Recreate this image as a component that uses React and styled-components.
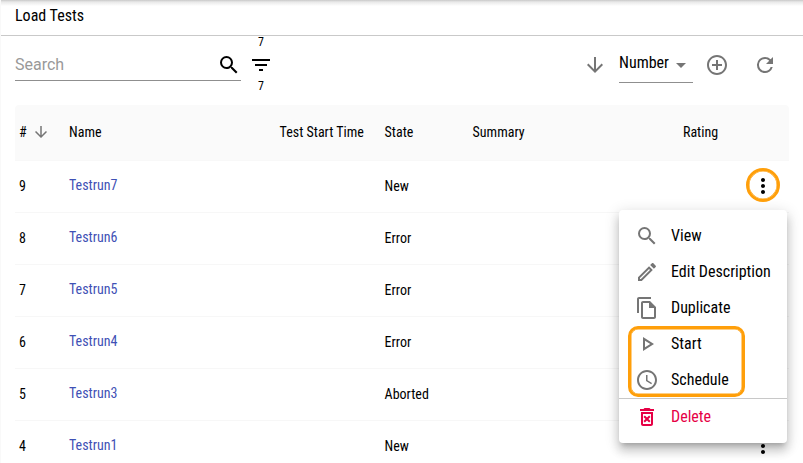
import React from "react";
import styled, { createGlobalStyle, css } from "styled-components";

const GlobalStyle = createGlobalStyle`
  * { box-sizing: border-box; }
  html, body { margin: 0; background: #fff; overflow: hidden; }
  body { font-family: "Roboto Condensed", Roboto, sans-serif; font-stretch: 75%; font-size: 14px; color: #000; }
`;

const PATHS = {
  search:
    "M15.5 14h-.79l-.28-.27A6.471 6.471 0 0 0 16 9.5 6.5 6.5 0 1 0 9.5 16c1.61 0 3.09-.59 4.23-1.57l.27.28v.79l5 4.99L20.49 19l-4.99-5zm-6 0C7.01 14 5 11.99 5 9.5S7.01 5 9.5 5 14 7.01 14 9.5 11.99 14 9.5 14z",
  filter: "M10 18h4v-2h-4v2zM3 6v2h18V6H3zm3 7h12v-2H6v2z",
  down: "M20 12l-1.41-1.41L13 16.17V4h-2v12.17l-5.58-5.59L4 12l8 8 8-8z",
  add: "M13 7h-2v4H7v2h4v4h2v-4h4v-2h-4V7zm-1-5C6.48 2 2 6.48 2 12s4.48 10 10 10 10-4.48 10-10S17.52 2 12 2zm0 18c-4.41 0-8-3.59-8-8s3.59-8 8-8 8 3.59 8 8-3.59 8-8 8z",
  refresh:
    "M17.65 6.35A7.958 7.958 0 0 0 12 4a8 8 0 1 0 7.73 10h-2.08A5.99 5.99 0 0 1 12 18c-3.31 0-6-2.69-6-6s2.69-6 6-6c1.66 0 3.14.69 4.22 1.78L13 11h7V4l-2.35 2.35z",
  more: "M12 8c1.1 0 2-.9 2-2s-.9-2-2-2-2 .9-2 2 .9 2 2 2zm0 2c-1.1 0-2 .9-2 2s.9 2 2 2 2-.9 2-2-.9-2-2-2zm0 6c-1.1 0-2 .9-2 2s.9 2 2 2 2-.9 2-2-.9-2-2-2z",
  edit: "M14.06 9.02l.92.92L5.92 19H5v-.92l9.06-9.06M17.66 3c-.25 0-.51.1-.7.29l-1.83 1.83 3.75 3.75 1.83-1.83c.39-.39.39-1.02 0-1.41l-2.34-2.34c-.2-.2-.45-.29-.71-.29zm-3.6 3.19L3 17.25V21h3.75L17.81 9.94l-3.75-3.75z",
  copy: "M16 1H4c-1.1 0-2 .9-2 2v14h2V3h12V1zm-1 4H8c-1.1 0-1.99.9-1.99 2L6 21c0 1.1.89 2 1.99 2H19c1.1 0 2-.9 2-2V11l-6-6zM8 21V7h6v5h5v9H8z",
  play: "M10 8.64L15.27 12 10 15.36V8.64M8 5v14l11-7L8 5z",
  clock:
    "M11.99 2C6.47 2 2 6.48 2 12s4.47 10 9.99 10C17.52 22 22 17.52 22 12S17.52 2 11.99 2zM12 20c-4.42 0-8-3.58-8-8s3.58-8 8-8 8 3.58 8 8-3.58 8-8 8zm.5-13H11v6l5.25 3.15.75-1.23-4.5-2.67z",
  trash:
    "M14.12 10.47L12 12.59l-2.13-2.12-1.41 1.41L10.59 14l-2.12 2.12 1.41 1.41L12 15.41l2.12 2.12 1.41-1.41L13.41 14l2.12-2.12-1.41-1.41zM15.5 4l-1-1h-5l-1 1H5v2h14V4h-3.5zM6 19c0 1.1.9 2 2 2h8c1.1 0 2-.9 2-2V7H6v12zM8 9h8v10H8V9z",
};

const Svg = styled.svg`
  display: block;
  flex: none;
  width: ${(p) => p.$size}px;
  height: ${(p) => p.$size}px;
  fill: ${(p) => p.$color};
`;

const Icon = ({ name, size = 24, color = "#757575" }) => (
  <Svg viewBox="0 0 24 24" $size={size} $color={color}>
    <path d={PATHS[name]} />
  </Svg>
);

const Page = styled.main`
  position: relative;
  width: 803px;
  height: 463px;
  overflow: hidden;
  border-left: 1px solid #f9f9f9;
  background: #fff;
`;

const TitleBar = styled.header`
  height: 36px;
  padding: 6px 14px 0;
  border-bottom: 1px solid #c9c9c9;
  background: linear-gradient(#c8c8c8, #e9e9e9 2px, #fff 6px);
  font-size: 16px;
  line-height: 20px;
`;

const Toolbar = styled.div`
  display: flex;
  height: 69px;
  padding: 0 14px;
`;

const SearchField = styled.label`
  display: flex;
  align-items: center;
  justify-content: space-between;
  width: 226px;
  height: 45px;
  padding: 13px 0 0;
  border-bottom: 1px solid #8f8f8f;
`;

const Placeholder = styled.span`
  font-family: Roboto, sans-serif;
  font-stretch: 100%;
  font-size: 16px;
  color: #999;
`;

const Filter = styled.div`
  display: flex;
  flex-direction: column;
  align-items: center;
  width: 24px;
  margin-left: 8px;
  font-size: 12px;
  line-height: 12px;
`;

const FilterCount = styled.span`
  height: ${(p) => (p.$above ? 17 : 12)}px;
  margin-top: ${(p) => (p.$above ? 0 : 3)}px;
`;

const Controls = styled.div`
  display: flex;
  align-items: flex-start;
  margin-left: auto;
  padding: 17px 12px 0 0;
`;

const Select = styled.div`
  display: flex;
  align-items: center;
  justify-content: space-between;
  width: 74px;
  height: 30px;
  margin: 0 12px;
  padding: 0 7px 10px 0;
  border-bottom: 1px solid #8f8f8f;
  font-size: 16px;
  line-height: 20px;
`;

const Caret = styled.span`
  margin-top: 5px;
  border: 5px solid transparent;
  border-top-color: #757575;
  border-bottom: 0;
`;

const Spacer = styled.span`
  width: 24px;
`;

const Table = styled.section`
  width: 774px;
  margin-left: 14px;
`;

const columns = css`
  display: grid;
  grid-template-columns: 50px 210.6px 105px 88px 210.4px 68px 24px;
  align-items: center;
  padding-left: 4px;
`;

const HeadRow = styled.div`
  ${columns}
  height: 56px;
  padding-bottom: 2px;
  border-bottom: 1px solid #f8f8f8;
  border-radius: 4px 4px 0 0;
  background: #fafafa;
`;

const Row = styled.div`
  ${columns}
  height: 52px;
  padding-bottom: 2px;
  border-bottom: 1px solid #f7f7f7;
`;

const SortHead = styled.span`
  display: flex;
  align-items: center;
  gap: 5px;
`;

const NameLink = styled.a`
  color: #3f51b5;
  padding-bottom: 2px;
`;

const MoreButton = styled.span`
  grid-column: 7;
`;

const Menu = styled.div`
  position: absolute;
  left: 618px;
  top: 210px;
  width: 168px;
  padding: 8px 0;
  border-radius: 4px;
  background: #fff;
  box-shadow: 0 5px 5px -3px rgba(0, 0, 0, 0.2), 0 8px 10px 1px rgba(0, 0, 0, 0.14), 0 3px 14px 2px rgba(0, 0, 0, 0.12);
`;

const MenuItem = styled.div`
  display: flex;
  align-items: center;
  gap: 12px;
  height: 36px;
  padding-left: 16px;
  font-size: 16px;
  color: ${(p) => (p.$danger ? "#e60045" : "inherit")};
`;

const MenuLabel = styled.span`
  padding-bottom: 2px;
`;

const Divider = styled.div`
  height: 1px;
  background: #c8c8c8;
`;

const Highlight = styled.div`
  position: absolute;
  pointer-events: none;
  border: 3px solid #ff9f0a;
  box-shadow: inset 0 0 0 0.5px #ff9f0a;
`;

const MoreRing = styled(Highlight)`
  left: 745px;
  top: 168px;
  width: 34px;
  height: 34px;
  border-radius: 50%;
`;

const ActionsRing = styled(Highlight)`
  left: 627px;
  top: 326px;
  width: 117px;
  height: 71px;
  border-radius: 10px;
`;

const RUNS = [
  [9, "Testrun7", "New"],
  [8, "Testrun6", "Error"],
  [7, "Testrun5", "Error"],
  [6, "Testrun4", "Error"],
  [5, "Testrun3", "Aborted"],
  [4, "Testrun1", "New"],
];

const ACTIONS = [
  ["search", "View"],
  ["edit", "Edit Description"],
  ["copy", "Duplicate"],
  ["play", "Start"],
  ["clock", "Schedule"],
];

export default function App() {
  return (
    <>
      <GlobalStyle />
      <Page>
        <TitleBar>Load Tests</TitleBar>
        <Toolbar>
          <SearchField>
            <Placeholder>Search</Placeholder>
            <Icon name="search" color="#000" />
          </SearchField>
          <Filter>
            <FilterCount $above>7</FilterCount>
            <Icon name="filter" color="#000" />
            <FilterCount>7</FilterCount>
          </Filter>
          <Controls>
            <Icon name="down" />
            <Select>
              Number
              <Caret />
            </Select>
            <Icon name="add" />
            <Spacer />
            <Icon name="refresh" />
          </Controls>
        </Toolbar>
        <Table>
          <HeadRow>
            <SortHead>
              # <Icon name="down" size={18} />
            </SortHead>
            <span>Name</span>
            <span>Test Start Time</span>
            <span>State</span>
            <span>Summary</span>
            <span>Rating</span>
          </HeadRow>
          {RUNS.map(([number, name, state]) => (
            <Row key={number}>
              <span>{number}</span>
              <NameLink>{name}</NameLink>
              <span />
              <span>{state}</span>
              <MoreButton>
                <Icon name="more" color="#000" />
              </MoreButton>
            </Row>
          ))}
        </Table>
        <Menu>
          {ACTIONS.map(([icon, label]) => (
            <MenuItem key={label}>
              <Icon name={icon} />
              <MenuLabel>{label}</MenuLabel>
            </MenuItem>
          ))}
          <Divider />
          <MenuItem $danger>
            <Icon name="trash" color="#e60045" />
            <MenuLabel>Delete</MenuLabel>
          </MenuItem>
        </Menu>
        <MoreRing />
        <ActionsRing />
      </Page>
    </>
  );
}
